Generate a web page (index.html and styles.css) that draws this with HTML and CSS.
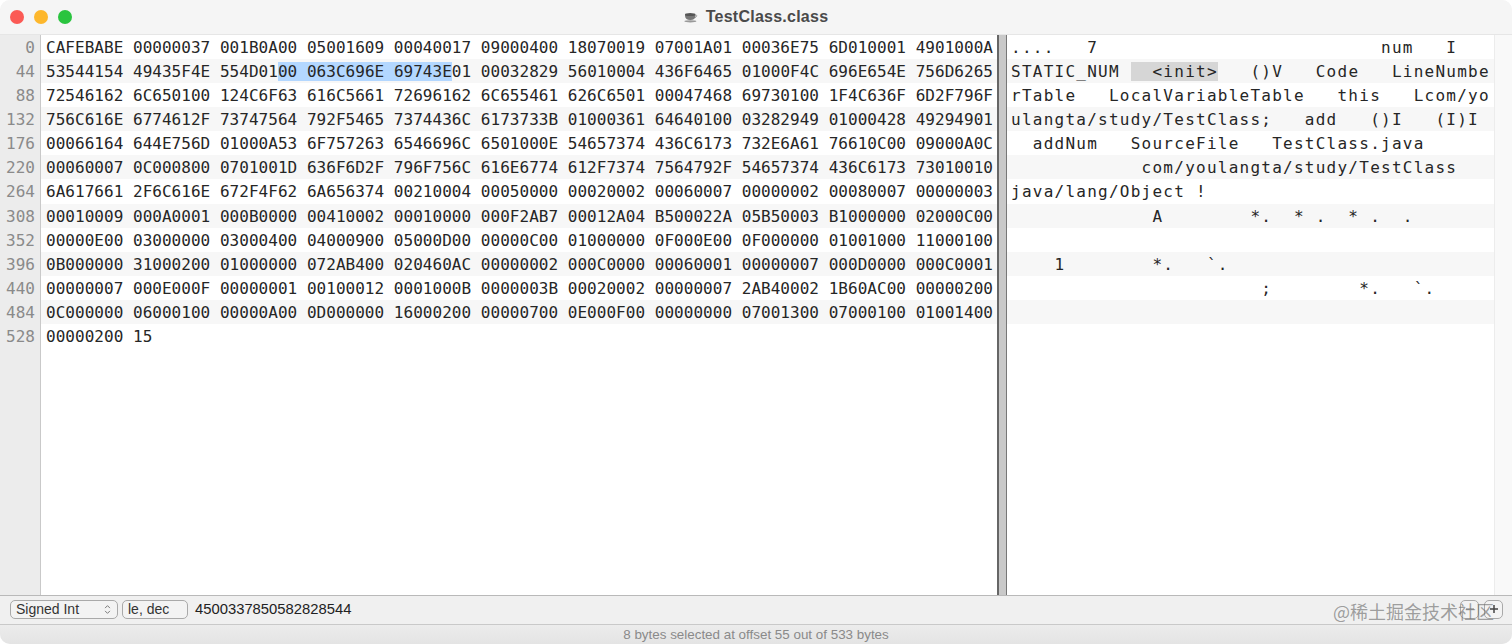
FILE: index.html
```
<!DOCTYPE html>
<html lang="en">
<head>
<meta charset="utf-8">
<title>TestClass.class</title>
<link rel="stylesheet" href="styles.css">
</head>
<body>
<div class="window">
  <header class="titlebar">
    <div class="lights"><span class="light red"></span><span class="light yellow"></span><span class="light green"></span></div>
    <div class="title">
      <svg class="cup" viewBox="0 0 14 12" width="14" height="12"><path d="M1 3.5h10.5v1.2C11.5 7.4 9.6 9 6.3 9S1 7.4 1 4.7z" fill="#777"/><ellipse cx="6.2" cy="3.4" rx="5.2" ry="1.5" fill="#555"/><path d="M11.4 4.2h1c.6 0 .6 1.8-1.6 2.5" fill="none" stroke="#888" stroke-width=".8"/><ellipse cx="6.4" cy="10.3" rx="6" ry="1.1" fill="#999"/></svg>
      <span>TestClass.class</span>
    </div>
  </header>
  <main class="content">
    <div class="gutter">
      <div class="row">0</div><div class="row">44</div><div class="row">88</div><div class="row">132</div><div class="row">176</div><div class="row">220</div><div class="row">264</div><div class="row">308</div><div class="row">352</div><div class="row">396</div><div class="row">440</div><div class="row">484</div><div class="row">528</div>
    </div>
    <div class="pane hex">
      <div class="row">CAFEBABE 00000037 001B0A00 05001609 00040017 09000400 18070019 07001A01 00036E75 6D010001 4901000A</div>
      <div class="row">53544154 49435F4E 554D01<span class="sel-hex">00 063C696E 69743E</span>01 00032829 56010004 436F6465 01000F4C 696E654E 756D6265</div>
      <div class="row">72546162 6C650100 124C6F63 616C5661 72696162 6C655461 626C6501 00047468 69730100 1F4C636F 6D2F796F</div>
      <div class="row">756C616E 6774612F 73747564 792F5465 7374436C 6173733B 01000361 64640100 03282949 01000428 49294901</div>
      <div class="row">00066164 644E756D 01000A53 6F757263 6546696C 6501000E 54657374 436C6173 732E6A61 76610C00 09000A0C</div>
      <div class="row">00060007 0C000800 0701001D 636F6D2F 796F756C 616E6774 612F7374 7564792F 54657374 436C6173 73010010</div>
      <div class="row">6A617661 2F6C616E 672F4F62 6A656374 00210004 00050000 00020002 00060007 00000002 00080007 00000003</div>
      <div class="row">00010009 000A0001 000B0000 00410002 00010000 000F2AB7 00012A04 B500022A 05B50003 B1000000 02000C00</div>
      <div class="row">00000E00 03000000 03000400 04000900 05000D00 00000C00 01000000 0F000E00 0F000000 01001000 11000100</div>
      <div class="row">0B000000 31000200 01000000 072AB400 020460AC 00000002 000C0000 00060001 00000007 000D0000 000C0001</div>
      <div class="row">00000007 000E000F 00000001 00100012 0001000B 0000003B 00020002 00000007 2AB40002 1B60AC00 00000200</div>
      <div class="row">0C000000 06000100 00000A00 0D000000 16000200 00000700 0E000F00 00000000 07001300 07000100 01001400</div>
      <div class="row">00000200 15</div>
    </div>
    <div class="divider"></div>
    <div class="pane ascii">
      <div class="row">....   7                          num   I   </div>
      <div class="row">STATIC_NUM <span class="sel-ascii">  &lt;init&gt;</span>   ()V   Code   LineNumbe</div>
      <div class="row">rTable   LocalVariableTable   this   Lcom/yo</div>
      <div class="row">ulangta/study/TestClass;   add   ()I   (I)I </div>
      <div class="row">  addNum   SourceFile   TestClass.java</div>
      <div class="row">            com/youlangta/study/TestClass</div>
      <div class="row">java/lang/Object !</div>
      <div class="row">             A        *.  * .  * .  .</div>
      <div class="row"> </div>
      <div class="row">    1        *.   `.</div>
      <div class="row">                       ;        *.   `.</div>
      <div class="row"> </div>
      <div class="row"> </div>
    </div>
    <div class="scroller"></div>
  </main>
  <div class="toolbar">
    <div class="popup popup-type"><span>Signed Int</span>
      <svg viewBox="0 0 8 12" width="7" height="11"><path d="M1.2 4.4 4 1.6l2.8 2.8M1.2 7.6 4 10.4l2.8-2.8" fill="none" stroke="#777" stroke-width="1.1"/></svg>
    </div>
    <div class="popup popup-fmt">le, dec</div>
    <div class="value">4500337850582828544</div>
    <div class="steppers">
      <div class="stepper"><svg viewBox="0 0 10 10" width="10" height="10"><path d="M1 5h8" stroke="#777" stroke-width="1.2"/></svg></div>
      <div class="stepper"><svg viewBox="0 0 10 10" width="10" height="10"><path d="M1 5h8M5 1v8" stroke="#444" stroke-width="1.5"/></svg></div>
    </div>
    <div class="watermark">@稀土掘金技术社区</div>
  </div>
  <footer class="status">8 bytes selected at offset 55 out of 533 bytes</footer>
</div>
</body>
</html>
```
FILE: styles.css
```
* { box-sizing: border-box; }
html, body { margin: 0; height: 100%; background: #fff; overflow: hidden; }
.window {
  height: 644px;
  display: flex;
  flex-direction: column;
  border-radius: 10px;
  overflow: hidden;
  background: #f5f5f5;
  font-family: "Liberation Sans", Arial, sans-serif;
}
.titlebar {
  height: 35px;
  flex: none;
  display: grid;
  grid-template-columns: 1fr auto 1fr;
  align-items: center;
  background: #f5f5f5;
  border-bottom: 1px solid #e6e6e6;
  padding-left: 10px;
}
.lights { display: flex; gap: 10px; }
.light { width: 14px; height: 14px; border-radius: 50%; }
.red { background: #fb5a55; }
.yellow { background: #fdb72c; }
.green { background: #2ac43f; }
.title {
  display: flex;
  align-items: center;
  gap: 8px;
  font-size: 16px;
  letter-spacing: 0.25px;
  font-weight: 700;
  color: #4a4a4a;
  margin-left: -10px;
}
.content { flex: 1; min-height: 0; display: flex; background: #fff; }
.row {
  height: 24.08px;
  line-height: 26px;
  white-space: pre;
  font-family: "DejaVu Sans Mono", monospace;
  font-size: 16px;
  color: #262626;
}
.gutter {
  width: 41px;
  flex: none;
  background: #ececec;
  border-right: 1px solid #c9c9c9;
  text-align: right;
  padding-right: 5px;
}
.gutter .row { color: #8a8a8a; }
.pane { min-width: 0; }
.pane .row:nth-child(even) { background: #f7f7f7; }
.pane .row:nth-child(13) { background: #fff; }
.hex { width: 956px; flex: none; background: #fff; }
.hex .row { padding-left: 5px; letter-spacing: 0.03px; }
.ascii { flex: 1; }
.ascii .row { padding-left: 4px; letter-spacing: 1.25px; }
.sel-hex { background: #b3d7ff; }
.sel-ascii { background: #d6d6d6; }
.divider {
  width: 10px;
  flex: none;
  background: #c9c9c9;
  border-left: 2px solid #666;
  border-right: 1px solid #777;
}
.scroller { width: 18px; flex: none; background: #f9f9f9; border-left: 1px solid #ececec; }
.toolbar {
  position: relative;
  height: 30px;
  flex: none;
  display: flex;
  align-items: center;
  gap: 4px;
  padding: 0 9px 2px 10px;
  background: #f0f0f0;
  border-top: 1px solid #b9b9b9;
  border-bottom: 1px solid #c9c9c9;
}
.popup {
  height: 19px;
  display: flex;
  align-items: center;
  justify-content: space-between;
  border: 1px solid #a9a9a9;
  border-radius: 5px;
  background: #f3f3f3;
  font-size: 14px;
  color: #333;
  padding: 0 6px 0 5px;
}
.popup-type { width: 108px; }
.popup-fmt { width: 66px; }
.value { font-size: 14.8px; color: #222; margin-left: 3px; }
.steppers { margin-left: auto; display: flex; gap: 5px; }
.stepper {
  width: 19px;
  height: 19px;
  display: flex;
  align-items: center;
  justify-content: center;
  border: 1px solid #a9a9a9;
  border-radius: 5px;
  background: #f3f3f3;
}
.watermark {
  position: absolute;
  left: 1333px;
  top: 3px;
  font-family: "Noto Sans CJK SC", sans-serif;
  font-size: 18px;
  line-height: 24px;
  color: rgba(110, 110, 110, 0.65);
  white-space: nowrap;
}
.status {
  height: 19px;
  flex: none;
  display: flex;
  align-items: center;
  justify-content: center;
  background: linear-gradient(#ececec, #e4e4e4);
  font-size: 13.4px;
  color: #8a8a8a;
}
```
